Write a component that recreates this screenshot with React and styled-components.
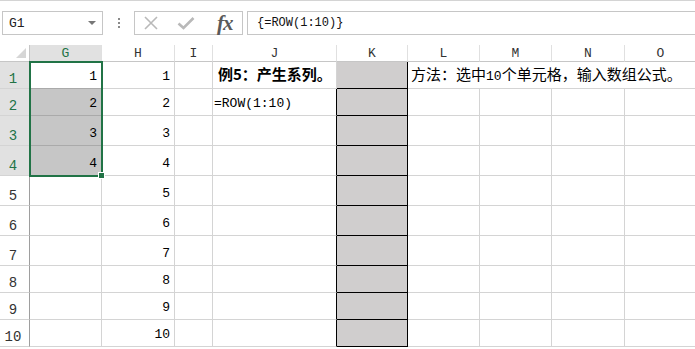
import React from 'react'
import styled, { createGlobalStyle } from 'styled-components'

const GREEN = '#217346'
const GRID = '#d4d4d4'
const MONO = '"Liberation Mono", "Noto Sans CJK SC", monospace'
const CJK = '"Noto Sans CJK SC", "Liberation Sans", sans-serif'

const columns = [
  { name: 'G', width: 72 },
  { name: 'H', width: 73 },
  { name: 'I', width: 38 },
  { name: 'J', width: 124 },
  { name: 'K', width: 71 },
  { name: 'L', width: 72 },
  { name: 'M', width: 72 },
  { name: 'N', width: 73 },
  { name: 'O', width: 72 },
]

const rowHeights = [27, 27, 30, 30, 30, 30, 30, 27, 27, 27]

const GlobalStyle = createGlobalStyle`
  html, body {
    margin: 0;
    padding: 0;
    background: #ffffff;
    overflow: hidden;
  }
  body {
    font-family: ${MONO};
    color: #000;
  }
`

const Page = styled.div`
  width: 695px;
  height: 349px;
  display: flex;
  flex-direction: column;
  overflow: hidden;
`

const FormulaBar = styled.div`
  height: 45px;
  box-sizing: border-box;
  border-top: 1px solid ${GRID};
  padding: 10px 0 0 2px;
  display: flex;
  align-items: flex-start;
`

const NameBox = styled.div`
  width: 101px;
  height: 24px;
  box-sizing: border-box;
  border: 1px solid #c6c6c6;
  display: flex;
  align-items: center;
  justify-content: space-between;
  padding: 0 6px 0 6px;
  font-size: 13px;
  color: #222;
`

const Caret = styled.span`
  width: 0;
  height: 0;
  border-left: 4px solid transparent;
  border-right: 4px solid transparent;
  border-top: 4px solid #777;
`

const Grip = styled.div`
  width: 31px;
  height: 24px;
  display: flex;
  flex-direction: column;
  align-items: center;
  justify-content: center;
  gap: 2px;
`

const Dot = styled.span`
  width: 2px;
  height: 2px;
  background: #8a8a8a;
`

const FxGroup = styled.div`
  width: 109px;
  height: 24px;
  box-sizing: border-box;
  border: 1px solid #c6c6c6;
  display: flex;
  align-items: center;
  padding-left: 8px;
  gap: 18px;
`

const FxText = styled.span`
  font-family: "Liberation Serif", serif;
  font-style: italic;
  font-weight: 700;
  font-size: 21px;
  color: #5a5a5a;
  letter-spacing: -1px;
  line-height: 1;
  margin-left: 4px;
`

const FormulaInput = styled.div`
  flex: 1;
  margin-left: 4px;
  margin-right: -2px;
  height: 24px;
  box-sizing: border-box;
  border: 1px solid #c6c6c6;
  display: flex;
  align-items: center;
  padding-left: 9px;
  font-size: 12px;
  color: #111;
`

const Sheet = styled.div`
  position: relative;
  display: grid;
  grid-template-columns: 30px ${columns.map((c) => `${c.width}px`).join(' ')};
  grid-template-rows: 17px ${rowHeights.map((h) => `${h}px`).join(' ')};
`

const Corner = styled.div`
  box-sizing: border-box;
  border-right: 1px solid #c6c6c6;
  border-bottom: 1px solid #c6c6c6;
  display: flex;
  align-items: flex-end;
  justify-content: flex-end;
  padding: 0 3px 3px 0;
`

const CornerMark = styled.span`
  width: 0;
  height: 0;
  border-left: 10px solid transparent;
  border-bottom: 10px solid #d6d6d6;
`

const ColHead = styled.div`
  box-sizing: border-box;
  border-right: 1px solid #e0e0e0;
  border-bottom: 1px solid #c6c6c6;
  background: ${(p) => (p.$active ? '#e1e1e1' : '#ffffff')};
  color: ${(p) => (p.$active ? GREEN : '#333')};
  font-size: 13px;
  display: flex;
  align-items: center;
  justify-content: center;
`

const RowHead = styled.div`
  box-sizing: border-box;
  border-right: 1px solid #9e9e9e;
  border-bottom: 1px solid ${GRID};
  background: ${(p) => (p.$active ? '#e1e1e1' : '#ffffff')};
  color: ${(p) => (p.$active ? GREEN : '#333')};
  font-size: 14px;
  line-height: 16px;
  display: flex;
  align-items: flex-end;
  justify-content: center;
  padding: 0 3px 1px 0;
`

const Cell = styled.div`
  box-sizing: border-box;
  grid-column: ${(p) => (p.$span ? `span ${p.$span}` : 'auto')};
  border-right: 1px solid ${(p) => p.$right || GRID};
  border-bottom: 1px solid ${(p) => p.$bottom || GRID};
  background: ${(p) => p.$bg || 'transparent'};
  font-size: 13px;
  line-height: 16px;
  font-weight: ${(p) => (p.$bold ? 700 : 400)};
  display: flex;
  align-items: flex-end;
  justify-content: ${(p) => (p.$align === 'right' ? 'flex-end' : 'flex-start')};
  padding: 0 4px 3px ${(p) => p.$indent ?? 2}px;
  white-space: nowrap;
`

const CellText = styled.span`
  display: block;
`

const Zh = styled.span`
  font-family: ${CJK};
  font-size: 15px;
`

const Selection = styled.div`
  position: absolute;
  left: 29px;
  top: 16px;
  width: 74px;
  height: 116px;
  box-sizing: border-box;
  border: 2px solid ${GREEN};
  pointer-events: none;
`

const FillHandle = styled.div`
  position: absolute;
  left: 98px;
  top: 127px;
  width: 7px;
  height: 7px;
  box-sizing: border-box;
  background: ${GREEN};
  border: 1px solid #fff;
`

const CrossIcon = () => (
  <svg width="16" height="16" viewBox="0 0 16 16">
    <path d="M2 2 L14 14 M14 2 L2 14" stroke="#b9b9b9" strokeWidth="1.6" fill="none" />
  </svg>
)

const CheckIcon = () => (
  <svg width="18" height="14" viewBox="0 0 18 14">
    <path d="M1.5 7.5 L6.5 12 L16.5 2" stroke="#b9b9b9" strokeWidth="2.6" fill="none" />
  </svg>
)

const KFILL = '#d0cece'

function cellFor(col, row) {
  const name = columns[col].name
  if (name === 'G') {
    if (row <= 4) {
      return { text: String(row), align: 'right', bg: row === 1 ? undefined : '#c6c6c6', bottom: row < 4 ? '#aaaaaa' : undefined }
    }
    return {}
  }
  if (name === 'H') return { text: String(row), align: 'right' }
  if (name === 'J') {
    const right = row >= 2 ? '#000' : undefined
    if (row === 1) return { text: <Zh>例5：产生系列。</Zh>, bold: true, indent: 5, right }
    if (row === 2) return { text: '=ROW(1:10)', indent: 1, right }
    return { right }
  }
  if (name === 'K') return { bg: KFILL, right: '#000', bottom: '#000' }
  return {}
}

export default function App() {
  const cells = []
  rowHeights.forEach((_, i) => {
    const row = i + 1
    cells.push(
      <RowHead key={`rh${row}`} $active={row <= 4}>
        {row}
      </RowHead>
    )
    columns.forEach((c, ci) => {
      if (row === 1 && ['M', 'N', 'O'].includes(c.name)) return
      if (row === 1 && c.name === 'L') {
        cells.push(
          <Cell key="L1" $span={4} $right="transparent" $indent={3}>
            <CellText>
              <Zh>方法：选中</Zh>10<Zh>个单元格，输入数组公式。</Zh>
            </CellText>
          </Cell>
        )
        return
      }
      const d = cellFor(ci, row)
      cells.push(
        <Cell
          key={`${c.name}${row}`}
          $align={d.align}
          $bg={d.bg}
          $right={d.right}
          $bottom={d.bottom}
          $bold={d.bold}
          $indent={d.indent}
        >
          {d.text && <CellText>{d.text}</CellText>}
        </Cell>
      )
    })
  })

  return (
    <Page>
      <GlobalStyle />
      <FormulaBar>
        <NameBox>
          G1
          <Caret />
        </NameBox>
        <Grip>
          <Dot />
          <Dot />
          <Dot />
        </Grip>
        <FxGroup>
          <CrossIcon />
          <CheckIcon />
          <FxText>fx</FxText>
        </FxGroup>
        <FormulaInput>{'{=ROW(1:10)}'}</FormulaInput>
      </FormulaBar>
      <Sheet>
        <Corner>
          <CornerMark />
        </Corner>
        {columns.map((c) => (
          <ColHead key={c.name} $active={c.name === 'G'}>
            {c.name}
          </ColHead>
        ))}
        {cells}
        <Selection />
        <FillHandle />
      </Sheet>
    </Page>
  )
}
